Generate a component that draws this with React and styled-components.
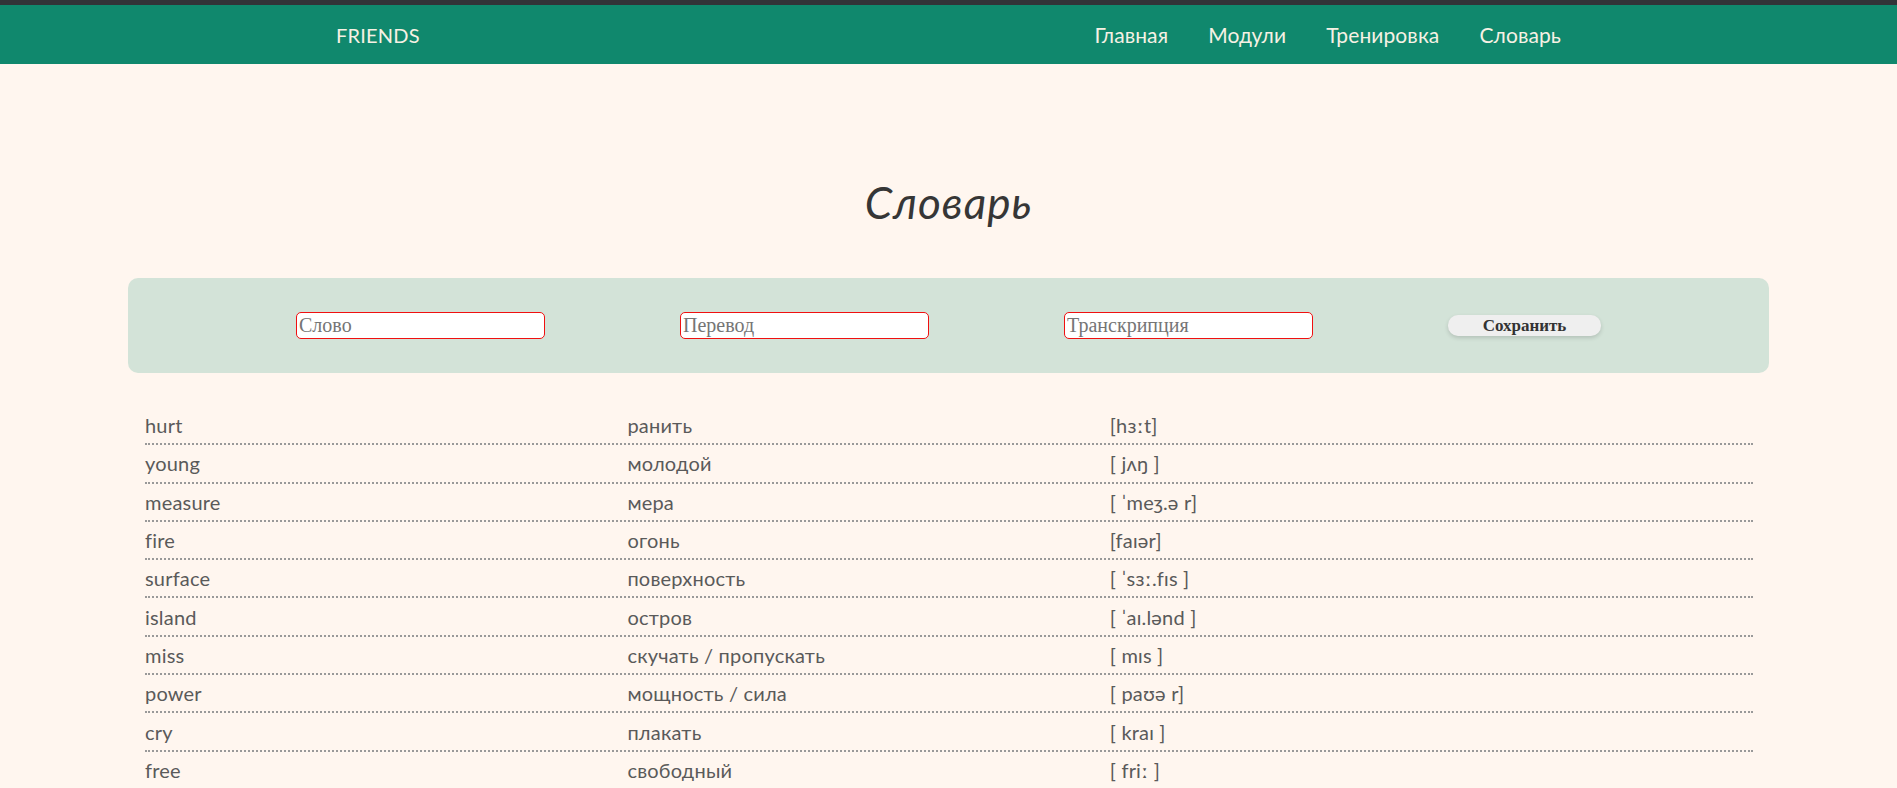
import React, { useState } from 'react';
import styled, { createGlobalStyle } from 'styled-components';

const GlobalStyle = createGlobalStyle`
  html, body {
    margin: 0;
    padding: 0;
    overflow: hidden;
    background-color: #fff6ef;
  }

  body {
    font-family: Lato, "Noto Sans", sans-serif;
    color: #4a4a4a;
  }
`;

const words = [
    { word: 'hurt', translation: 'ранить', transcription: '[hɜːt]' },
    { word: 'young', translation: 'молодой', transcription: '[ jʌŋ ]' },
    { word: 'measure', translation: 'мера', transcription: '[ ˈmeʒ.ə r]' },
    { word: 'fire', translation: 'огонь', transcription: '[faɪər]' },
    { word: 'surface', translation: 'поверхность', transcription: '[ ˈsɜː.fɪs ]' },
    { word: 'island', translation: 'остров', transcription: '[ ˈaɪ.lənd ]' },
    { word: 'miss', translation: 'скучать / пропускать', transcription: '[ mɪs ]' },
    { word: 'power', translation: 'мощность / сила', transcription: '[ paʊə r]' },
    { word: 'cry', translation: 'плакать', transcription: '[ kraɪ ]' },
    { word: 'free', translation: 'свободный', transcription: '[ friː ]' },
];

const TopStrip = styled.div`
  height: 5px;
  background-color: #323338;
`;

const Header = styled.header`
  height: 59px;
  background-color: #10886d;
  color: #f6f1e4;
`;

const HeaderInner = styled.div`
  width: 1225px;
  height: 100%;
  margin: 0 auto;
  display: flex;
  align-items: center;
  justify-content: space-between;
`;

const Logo = styled.a`
  font-size: 20px;
  letter-spacing: 0.2px;
`;

const Nav = styled.nav`
  display: flex;
  gap: 40px;
`;

const NavLink = styled.a`
  font-size: 21px;
  letter-spacing: 0.1px;
  cursor: pointer;
`;

const Main = styled.main`
  width: 1641px;
  margin: 0 auto;
  padding-top: 114px;
`;

const Title = styled.h1`
  margin: 0 0 52px;
  height: 48px;
  line-height: 48px;
  text-align: center;
  font-size: 44px;
  font-weight: 400;
  font-style: italic;
  letter-spacing: 1px;
  color: #363636;
`;

const FormPanel = styled.form`
  height: 95px;
  border-radius: 10px;
  background-color: #d3e3d8;
  display: flex;
  align-items: center;
  justify-content: center;
  gap: 135px;
`;

const Field = styled.input`
  box-sizing: border-box;
  width: 249px;
  height: 27px;
  padding: 1px 2px;
  border: 1px solid #f01010;
  border-radius: 5px;
  background-color: #ffffff;
  font-family: "Liberation Serif", serif;
  font-size: 20px;
  color: #333;
  outline: none;

  &::placeholder {
    color: #757575;
  }
`;

const SaveButton = styled.button`
  width: 153px;
  height: 21px;
  padding: 0;
  border: none;
  border-radius: 10px;
  background-color: #efefef;
  box-shadow: 0 2px 4px rgba(0, 0, 0, 0.15);
  font-family: "Liberation Serif", serif;
  font-weight: 700;
  font-size: 17px;
  color: #333;
  cursor: pointer;
`;

const WordTable = styled.div`
  margin: 34px 16px 0 17px;
`;

const Row = styled.div`
  display: grid;
  grid-template-columns: 30% 30% 40%;
  height: 38.3px;
  box-sizing: border-box;
  align-items: center;
  border-bottom: 2px dotted #999;
  font-size: 20px;
  letter-spacing: 0.2px;
  color: #5a5a5a;
`;

const Cell = styled.div`
  white-space: nowrap;
`;

export default function App() {
    const [form, setForm] = useState({ word: '', translation: '', transcription: '' });

    const handleChange = (e) => {
        setForm({ ...form, [e.target.name]: e.target.value });
    };

    const handleSubmit = (e) => {
        e.preventDefault();
    };

    return (
        <>
            <GlobalStyle />
            <TopStrip />
            <Header>
                <HeaderInner>
                    <Logo>FRIENDS</Logo>
                    <Nav>
                        <NavLink>Главная</NavLink>
                        <NavLink>Модули</NavLink>
                        <NavLink>Тренировка</NavLink>
                        <NavLink>Словарь</NavLink>
                    </Nav>
                </HeaderInner>
            </Header>
            <Main>
                <Title>Словарь</Title>
                <FormPanel onSubmit={handleSubmit}>
                    <Field name="word" placeholder="Слово" value={form.word} onChange={handleChange} />
                    <Field name="translation" placeholder="Перевод" value={form.translation} onChange={handleChange} />
                    <Field name="transcription" placeholder="Транскрипция" value={form.transcription} onChange={handleChange} />
                    <SaveButton type="submit">Сохранить</SaveButton>
                </FormPanel>
                <WordTable>
                    {words.map((w) => (
                        <Row key={w.word}>
                            <Cell>{w.word}</Cell>
                            <Cell>{w.translation}</Cell>
                            <Cell>{w.transcription}</Cell>
                        </Row>
                    ))}
                </WordTable>
            </Main>
        </>
    );
}
